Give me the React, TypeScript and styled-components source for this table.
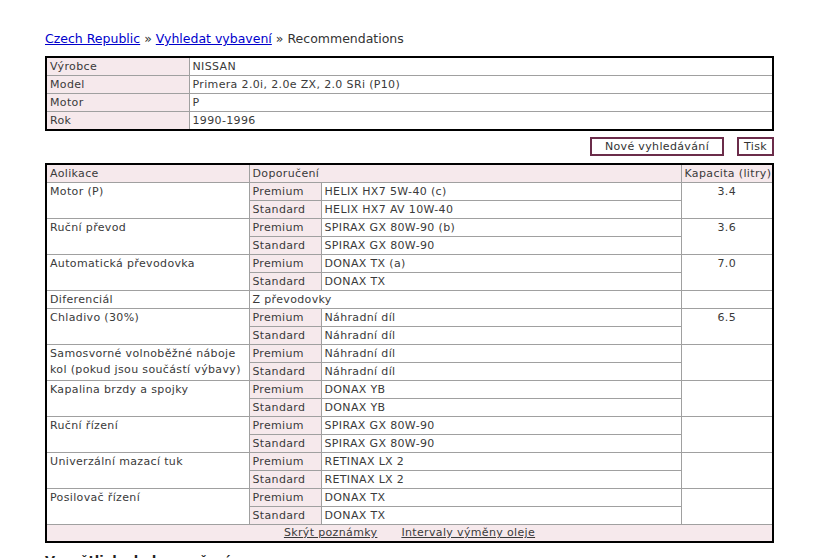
import React from "react";
import styled, { createGlobalStyle } from "styled-components";

const Global = createGlobalStyle`
  html, body { margin: 0; padding: 0; background: #fff; }
  body { font-family: Verdana, "DejaVu Sans", sans-serif; color: #3a3a3a; }
`;

const Page = styled.div`
  width: 729px;
  padding: 30px 0 0 45px;
`;

const Crumbs = styled.div`
  font-size: 12.5px;
  line-height: 18px;
  color: #333;
  margin-bottom: 8px;
`;

const Link = styled.a`
  color: #0000cc;
  text-decoration: underline;
`;

const Table = styled.table`
  width: 729px;
  border-collapse: collapse;
  border: 2px solid #000;
  font-size: 11px;
  letter-spacing: 0.35px;
  color: #3a3a3a;
  table-layout: fixed;
`;

const Cell = styled.td<{ $pink?: boolean; $center?: boolean }>`
  border: 1px solid #a0a0a0;
  padding: 1px 3px 0 3px;
  line-height: 16px;
  height: 16px;
  vertical-align: top;
  white-space: nowrap;
  background: ${(p) => (p.$pink ? "#f6e9ec" : "#fff")};
  text-align: ${(p) => (p.$center ? "center" : "left")};
`;

const WrapCell = styled(Cell)`
  white-space: normal;
  line-height: 16px;
`;

const Head = styled(Cell)`
  background: #f6e9ec;
`;

const Foot = styled.td`
  background: #f6e9ec;
  border-top: 1px solid #a0a0a0;
  text-align: center;
  height: 16px;
  line-height: 16px;
  padding: 0;
`;

const FootLink = styled.a`
  color: #3a3a3a;
  text-decoration: underline;
  margin: 0 12px;
`;

const Actions = styled.div`
  display: flex;
  justify-content: flex-end;
  gap: 13px;
  margin: 6px 0 7px;
`;

const Button = styled.button<{ $wide?: boolean }>`
  font-family: Verdana, "DejaVu Sans", sans-serif;
  font-size: 11px;
  color: #333;
  background: #fff;
  border: 2px solid #6b2c4a;
  height: 19px;
  padding: 0 ${(p) => (p.$wide ? "13px" : "5px")};
  line-height: 14px;
  letter-spacing: 0.35px;
`;

const Bottom = styled.div`
  font-size: 13px;
  font-weight: bold;
  margin-top: 10px;
  color: #222;
`;

type Row = { name: React.ReactNode; prem?: string; std?: string; single?: string; cap?: string };

const rows: Row[] = [
  { name: "Motor (P)", prem: "HELIX HX7 5W-40 (c)", std: "HELIX HX7 AV 10W-40", cap: "3.4" },
  { name: "Ruční převod", prem: "SPIRAX GX 80W-90 (b)", std: "SPIRAX GX 80W-90", cap: "3.6" },
  { name: "Automatická převodovka", prem: "DONAX TX (a)", std: "DONAX TX", cap: "7.0" },
  { name: "Diferenciál", single: "Z převodovky" },
  { name: "Chladivo (30%)", prem: "Náhradní díl", std: "Náhradní díl", cap: "6.5" },
  {
    name: (
      <>
        Samosvorné volnoběžné náboje
        <br />
        kol (pokud jsou součástí výbavy)
      </>
    ),
    prem: "Náhradní díl",
    std: "Náhradní díl",
  },
  { name: "Kapalina brzdy a spojky", prem: "DONAX YB", std: "DONAX YB" },
  { name: "Ruční řízení", prem: "SPIRAX GX 80W-90", std: "SPIRAX GX 80W-90" },
  { name: "Univerzální mazací tuk", prem: "RETINAX LX 2", std: "RETINAX LX 2" },
  { name: "Posilovač řízení", prem: "DONAX TX", std: "DONAX TX" },
];

export default function App() {
  return (
    <Page>
      <Global />
      <Crumbs>
        <Link href="#">Czech Republic</Link> » <Link href="#">Vyhledat vybavení</Link> » Recommendations
      </Crumbs>
      <Table>
        <colgroup>
          <col style={{ width: 143 }} />
          <col />
        </colgroup>
        <tbody>
          <tr><Cell $pink>Výrobce</Cell><Cell>NISSAN</Cell></tr>
          <tr><Cell $pink>Model</Cell><Cell>Primera 2.0i, 2.0e ZX, 2.0 SRi (P10)</Cell></tr>
          <tr><Cell $pink>Motor</Cell><Cell>P</Cell></tr>
          <tr><Cell $pink>Rok</Cell><Cell>1990-1996</Cell></tr>
        </tbody>
      </Table>
      <Actions>
        <Button $wide>Nové vyhledávání</Button>
        <Button>Tisk</Button>
      </Actions>
      <Table>
        <colgroup>
          <col style={{ width: 203 }} />
          <col style={{ width: 72 }} />
          <col style={{ width: 360 }} />
          <col />
        </colgroup>
        <tbody>
          <tr>
            <Head>Aolikace</Head>
            <Head colSpan={2}>Doporučení</Head>
            <Head>Kapacita (litry)</Head>
          </tr>
          {rows.map((r, i) =>
            r.single ? (
              <tr key={i}>
                <Cell>{r.name}</Cell>
                <Cell colSpan={2}>{r.single}</Cell>
                <Cell $center>{r.cap ?? ""}</Cell>
              </tr>
            ) : (
              <React.Fragment key={i}>
                <tr>
                  <WrapCell rowSpan={2}>{r.name}</WrapCell>
                  <Cell $pink>Premium</Cell>
                  <Cell>{r.prem}</Cell>
                  <Cell $center rowSpan={2}>{r.cap ?? ""}</Cell>
                </tr>
                <tr>
                  <Cell $pink>Standard</Cell>
                  <Cell>{r.std}</Cell>
                </tr>
              </React.Fragment>
            )
          )}
          <tr>
            <Foot colSpan={4}>
              <FootLink href="#">Skrýt poznámky</FootLink>
              <FootLink href="#">Intervaly výměny oleje</FootLink>
            </Foot>
          </tr>
        </tbody>
      </Table>
      <Bottom>Vysvětlivky k doporučením</Bottom>
    </Page>
  );
}
